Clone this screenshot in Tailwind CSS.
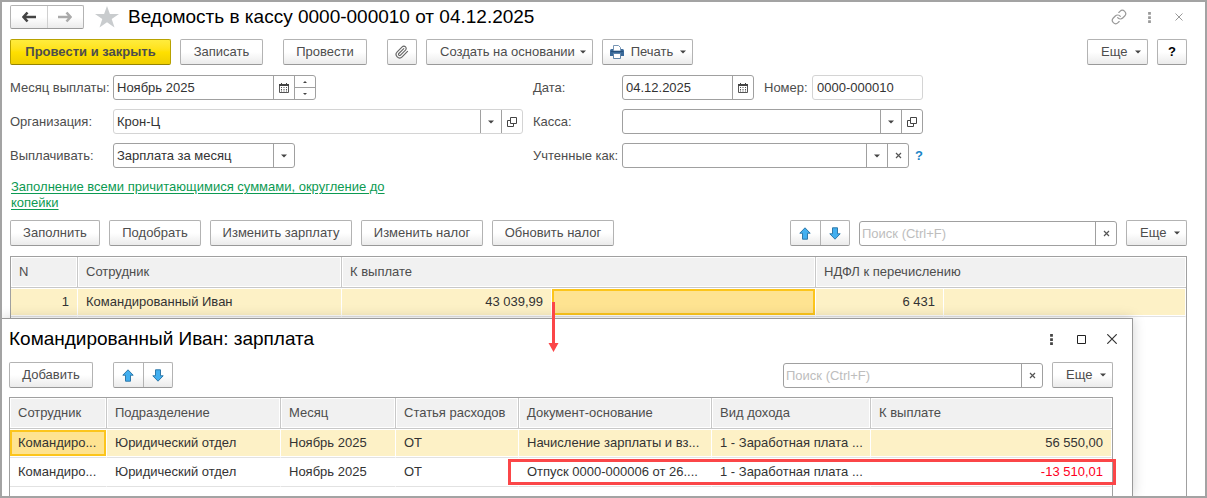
<!DOCTYPE html>
<html lang="ru">

<head>
    <meta charset="UTF-8">
    <meta name="viewport" content="width=device-width, initial-scale=1.0">
    <script src="https://cdn.jsdelivr.net/npm/@tailwindcss/browser@4"></script>
    <title>Ведомость в кассу</title>
</head>

<body class="bg-white font-['Liberation_Sans',Arial,sans-serif] text-[13px] leading-4 text-[#4d4d4d]">
    <!-- Shared icons -->
    <svg class="hidden" xmlns="http://www.w3.org/2000/svg">
        <symbol id="caret" viewBox="0 0 6 4">
            <path d="M0 0.5h6L3 3.5z" fill="#444" />
        </symbol>
        <symbol id="cross" viewBox="0 0 7 7">
            <path d="M1 1l5 5M6 1l-5 5" stroke="#555" stroke-width="1.2" fill="none" />
        </symbol>
        <symbol id="calendar" viewBox="0 0 10 10">
            <path d="M.5 2v7.500h9V2" fill="none" stroke="#555" />
            <path d="M0 1h10v2H0zM2 0h1v1H2zM7 0h1v1H7z" fill="#444" />
            <path d="M2 4.500h1M4.500 4.500h1M7 4.500h1M2 6.500h1M4.500 6.500h1M7 6.500h1M2 8h1M4.500 8h1M7 8h1" stroke="#555" />
        </symbol>
        <symbol id="open" viewBox="0 0 10 10">
            <path d="M3.500 0.500h6v6h-6zM3 3.500H0.500v6h6V7" fill="none" stroke="#444" />
        </symbol>
        <symbol id="arrow-up" viewBox="0 0 12 13">
            <path d="M6 .8l5.200 5.400H8.500v6H3.500v-6H.8z" fill="#41aff0" stroke="#2f79aa" stroke-linejoin="round" />
        </symbol>
        <symbol id="arrow-down" viewBox="0 0 12 13">
            <path d="M6 12.200l5.200-5.400H8.500v-6H3.500v6H.8z" fill="#41aff0" stroke="#2f79aa" stroke-linejoin="round" />
        </symbol>
        <symbol id="dots" viewBox="0 0 3 12">
            <path d="M0 0h3v3H0zM0 4.500h3v3H0zM0 9h3v3H0z" fill="currentColor" />
        </symbol>
    </svg>

    <main class="relative flex min-h-screen flex-col overflow-hidden border-2 border-[#a3a3a3] pl-2 pr-[18px] pt-[3px]">
        <!-- Title -->
        <header class="flex h-6 items-center">
            <div class="flex h-6 w-[74px] rounded-[2px] border border-[#b3b3b3] border-b-[#999] bg-linear-to-b from-white from-50% to-[#ebebeb]">
                <button type="button" aria-label="Назад" class="flex flex-1 items-center justify-center border-r border-[#d0d0d0]">
                    <svg class="h-3 w-[14px]" viewBox="0 0 14 12"><path d="M14 6H2M5.500 1.500L1.500 6l4 4.500" fill="none" stroke="#444" stroke-width="2.600" /></svg>
                </button>
                <button type="button" aria-label="Вперед" class="flex flex-1 items-center justify-center">
                    <svg class="h-3 w-[14px]" viewBox="0 0 14 12"><path d="M0 6h12M8.500 1.500l4 4.500-4 4.500" fill="none" stroke="#aaa" stroke-width="2.600" /></svg>
                </button>
            </div>
            <button type="button" aria-label="В избранное" class="ml-[11px]">
                <svg class="h-[22px] w-6" viewBox="0 0 24 22"><path d="M12 0l2.900 8H24l-7.300 5 2.800 8.600L12 16.300l-7.500 5.300L7.300 13 0 8h9.100z" fill="#c9ccce" /></svg>
            </button>
            <h1 class="ml-[9px] text-[19px] leading-6 text-black">Ведомость в кассу 0000-000010 от 04.12.2025</h1>
            <div class="ml-auto flex items-center text-[#999]">
                <button type="button" aria-label="Ссылка">
                    <svg class="h-4 w-4" viewBox="0 0 24 24" fill="none" stroke="currentColor" stroke-width="1.800" stroke-linecap="round"><path d="M10 13a5 5 0 007.540.540l3-3a5 5 0 00-7.070-7.070l-1.720 1.710" /><path d="M14 11a5 5 0 00-7.540-.540l-3 3a5 5 0 007.070 7.070l1.710-1.710" /></svg>
                </button>
                <button type="button" aria-label="Меню" class="ml-[21px]"><svg class="h-[11px] w-[3px]"><use href="#dots" /></svg></button>
                <button type="button" aria-label="Закрыть" class="ml-6 mr-1">
                    <svg class="h-2 w-2" viewBox="0 0 8 8"><path d="M.5.5l7 7M7.500.5l-7 7" stroke="currentColor" /></svg>
                </button>
            </div>
        </header>

        <!-- Commands -->
        <div class="mt-[10px] flex h-[26px]">
            <button type="button" class="w-[161px] rounded-[2px] border border-[#b8a200] border-b-[#968400] bg-linear-to-b from-[#ffec3c] via-[#ffe000] to-[#efcf00] font-bold">Провести и закрыть</button>
            <button type="button" class="ml-[9px] w-[83px] rounded-[2px] border border-[#b3b3b3] border-b-[#999] bg-linear-to-b from-white from-50% to-[#ebebeb]">Записать</button>
            <button type="button" class="ml-5 w-[84px] rounded-[2px] border border-[#b3b3b3] border-b-[#999] bg-linear-to-b from-white from-50% to-[#ebebeb]">Провести</button>
            <button type="button" aria-label="Файлы" class="ml-5 flex w-[30px] items-center justify-center rounded-[2px] border border-[#b3b3b3] border-b-[#999] bg-linear-to-b from-white from-50% to-[#ebebeb]">
                <svg class="h-[14px] w-[14px]" viewBox="0 0 24 24" fill="none" stroke="#666" stroke-width="2" stroke-linecap="round"><path d="M21.440 11.050l-9.190 9.190a6 6 0 01-8.490-8.490l8.570-8.570A4 4 0 1118 8.840l-8.590 8.570a2 2 0 01-2.830-2.830l8.490-8.480" /></svg>
            </button>
            <button type="button" class="ml-[9px] flex w-[167px] items-center justify-between rounded-[2px] border border-[#b3b3b3] border-b-[#999] bg-linear-to-b from-white from-50% to-[#ebebeb] pl-[13px] pr-[6px]">Создать на основании <svg class="h-1 w-[6px]"><use href="#caret" /></svg></button>
            <button type="button" class="ml-[9px] flex w-[91px] items-center justify-between rounded-[2px] border border-[#b3b3b3] border-b-[#999] bg-linear-to-b from-white from-50% to-[#ebebeb] pl-[7px] pr-[6px]">
                <svg class="h-[14px] w-[14px]" viewBox="0 0 14 14"><path d="M0 5.500Q0 4 1.500 4h11Q14 4 14 5.500V11H0z" fill="#39699a" /><path d="M3.500 6V.5h5l2 2V6z" fill="#fff" stroke="#7795b4" /><path d="M1 6.500h12" stroke="#244f7a" /><path d="M3.500 8.500h7v5h-7z" fill="#fff" stroke="#5f84a9" /></svg>
                Печать <svg class="h-1 w-[6px]"><use href="#caret" /></svg>
            </button>
            <button type="button" class="ml-auto flex w-[61px] items-center justify-between rounded-[2px] border border-[#b3b3b3] border-b-[#999] bg-linear-to-b from-white from-50% to-[#ebebeb] pl-[13px] pr-[6px]">Еще <svg class="h-1 w-[6px]"><use href="#caret" /></svg></button>
            <button type="button" class="ml-[9px] w-[30px] rounded-[2px] border border-[#b3b3b3] border-b-[#999] bg-linear-to-b from-white from-50% to-[#ebebeb] font-bold text-black">?</button>
        </div>

        <!-- Document fields -->
        <form class="mt-[10px] grid max-w-[913px] grid-cols-[minmax(0,513fr)_minmax(0,390fr)] gap-x-[10px] gap-y-[9px]">
            <div class="flex h-[25px] items-center">
                <label for="month" class="w-[103px]">Месяц выплаты:</label>
                <div class="flex h-full w-[203px] rounded-[3px] border border-[#a0a0a0] text-[#333]">
                    <input id="month" type="text" value="Ноябрь 2025" class="min-w-0 flex-1 px-[3px] outline-none">
                    <button type="button" aria-label="Календарь" class="flex w-[21px] items-center justify-center border-l border-[#a0a0a0]"><svg class="h-[10px] w-[10px]"><use href="#calendar" /></svg></button>
                    <div class="flex w-[21px] flex-col border-l border-[#a0a0a0]">
                        <button type="button" aria-label="Больше" class="flex flex-1 items-center justify-center border-b border-[#a0a0a0]"><svg class="h-[2px] w-1" viewBox="0 0 4 2"><path d="M0 2l2-2 2 2z" fill="#444" /></svg></button>
                        <button type="button" aria-label="Меньше" class="flex flex-1 items-center justify-center"><svg class="h-[2px] w-1" viewBox="0 0 4 2"><path d="M0 0l2 2 2-2z" fill="#444" /></svg></button>
                    </div>
                </div>
            </div>
            <div class="flex h-[25px] items-center">
                <label for="date" class="w-[89px]">Дата:</label>
                <div class="flex h-full w-[132px] rounded-[3px] border border-[#a0a0a0] text-[#333]">
                    <input id="date" type="text" value="04.12.2025" class="min-w-0 flex-1 px-[3px] outline-none">
                    <button type="button" aria-label="Календарь" class="flex w-[21px] items-center justify-center border-l border-[#a0a0a0]"><svg class="h-[10px] w-[10px]"><use href="#calendar" /></svg></button>
                </div>
                <label for="number" class="ml-[10px] w-12">Номер:</label>
                <input id="number" type="text" value="0000-000010" class="h-full min-w-0 flex-1 rounded-[3px] border border-[#d4d4d4] px-1 text-[#333] outline-none">
            </div>

            <div class="flex h-[25px] items-center">
                <label for="org" class="w-[103px]">Организация:</label>
                <div class="flex h-full flex-1 rounded-[3px] border border-[#d4d4d4] text-[#333]">
                    <select id="org" class="min-w-0 flex-1 appearance-none px-[3px] outline-none"><option>Крон-Ц</option></select>
                    <button type="button" aria-label="Выбрать" class="flex w-[21px] items-center justify-center border-l border-[#a0a0a0]"><svg class="h-1 w-[6px]"><use href="#caret" /></svg></button>
                    <button type="button" aria-label="Открыть" class="flex w-[21px] items-center justify-center border-l border-[#a0a0a0]"><svg class="h-[10px] w-[10px]"><use href="#open" /></svg></button>
                </div>
            </div>
            <div class="flex h-[25px] items-center">
                <label for="cash" class="w-[89px]">Касса:</label>
                <div class="flex h-full flex-1 rounded-[3px] border border-[#a0a0a0] text-[#333]">
                    <select id="cash" class="min-w-0 flex-1 appearance-none px-[3px] outline-none"><option></option></select>
                    <button type="button" aria-label="Выбрать" class="flex w-[21px] items-center justify-center border-l border-[#a0a0a0]"><svg class="h-1 w-[6px]"><use href="#caret" /></svg></button>
                    <button type="button" aria-label="Открыть" class="flex w-[21px] items-center justify-center border-l border-[#a0a0a0]"><svg class="h-[10px] w-[10px]"><use href="#open" /></svg></button>
                </div>
            </div>

            <div class="flex h-[25px] items-center">
                <label for="pay" class="w-[103px]">Выплачивать:</label>
                <div class="flex h-full w-[182px] rounded-[3px] border border-[#a0a0a0] text-[#333]">
                    <select id="pay" class="min-w-0 flex-1 appearance-none px-[3px] outline-none"><option>Зарплата за месяц</option></select>
                    <button type="button" aria-label="Выбрать" class="flex w-[21px] items-center justify-center border-l border-[#a0a0a0]"><svg class="h-1 w-[6px]"><use href="#caret" /></svg></button>
                </div>
            </div>
            <div class="flex h-[25px] items-center">
                <label for="kept" class="w-[89px] whitespace-nowrap">Учтенные как:</label>
                <div class="flex h-full flex-1 rounded-[3px] border border-[#a0a0a0] text-[#333]">
                    <select id="kept" class="min-w-0 flex-1 appearance-none px-[3px] outline-none"><option></option></select>
                    <button type="button" aria-label="Выбрать" class="flex w-[21px] items-center justify-center border-l border-[#a0a0a0]"><svg class="h-1 w-[6px]"><use href="#caret" /></svg></button>
                    <button type="button" aria-label="Очистить" class="flex w-[21px] items-center justify-center border-l border-[#a0a0a0]"><svg class="h-[7px] w-[7px]"><use href="#cross" /></svg></button>
                </div>
                <button type="button" class="w-[14px] pl-[6px] font-bold text-[#1b85c7]">?</button>
            </div>
        </form>

        <a href="#" class="ml-px mt-[11px] max-w-[384px] text-[#0c9a52] underline underline-offset-2">Заполнение всеми причитающимися суммами, округление до копейки</a>

        <!-- List commands -->
        <div class="mt-[9px] flex h-[26px] gap-[9px]">
            <button type="button" class="w-[90px] rounded-[2px] border border-[#b3b3b3] border-b-[#999] bg-linear-to-b from-white from-50% to-[#ebebeb]">Заполнить</button>
            <button type="button" class="w-[92px] rounded-[2px] border border-[#b3b3b3] border-b-[#999] bg-linear-to-b from-white from-50% to-[#ebebeb]">Подобрать</button>
            <button type="button" class="w-[142px] rounded-[2px] border border-[#b3b3b3] border-b-[#999] bg-linear-to-b from-white from-50% to-[#ebebeb]">Изменить зарплату</button>
            <button type="button" class="w-[122px] rounded-[2px] border border-[#b3b3b3] border-b-[#999] bg-linear-to-b from-white from-50% to-[#ebebeb]">Изменить налог</button>
            <button type="button" class="w-[122px] rounded-[2px] border border-[#b3b3b3] border-b-[#999] bg-linear-to-b from-white from-50% to-[#ebebeb]">Обновить налог</button>
            <div class="ml-auto flex w-[60px] rounded-[2px] border border-[#b3b3b3] border-b-[#999] bg-linear-to-b from-white from-50% to-[#ebebeb]">
                <button type="button" aria-label="Вверх" class="flex flex-1 items-center justify-center border-r border-[#b3b3b3]"><svg class="h-[13px] w-3"><use href="#arrow-up" /></svg></button>
                <button type="button" aria-label="Вниз" class="flex flex-1 items-center justify-center"><svg class="h-[13px] w-3"><use href="#arrow-down" /></svg></button>
            </div>
            <div class="mt-px flex w-[258px] rounded-[3px] border border-[#a0a0a0]">
                <input type="text" aria-label="Поиск" placeholder="Поиск (Ctrl+F)" class="min-w-0 flex-1 px-[2px] outline-none placeholder:text-[#bdbdbd]">
                <button type="button" aria-label="Очистить" class="flex w-[21px] items-center justify-center border-l border-[#a0a0a0]"><svg class="h-[7px] w-[7px]"><use href="#cross" /></svg></button>
            </div>
            <button type="button" class="flex w-[61px] items-center justify-between rounded-[2px] border border-[#b3b3b3] border-b-[#999] bg-linear-to-b from-white from-50% to-[#ebebeb] pl-[13px] pr-[6px]">Еще <svg class="h-1 w-[6px]"><use href="#caret" /></svg></button>
        </div>

        <!-- Employees -->
        <div class="mt-[10px] flex-1 border border-b-0 border-[#a0a0a0]">
            <table class="w-full table-fixed border-separate border-spacing-0">
                <colgroup>
                    <col class="w-[67px]">
                    <col class="w-[264px]">
                    <col class="w-[210px]">
                    <col class="w-[264px]">
                    <col class="w-[128px]">
                    <col>
                </colgroup>
                <thead class="text-left [&_th]:h-[31px] [&_th]:border-b [&_th]:border-r [&_th]:border-[#c8c8c8] [&_th]:bg-[#f1f1f1] [&_th]:px-2 [&_th]:font-normal [&_th]:shadow-[inset_0_0_0_1px_#fff] [&_th:last-child]:border-r-0">
                    <tr>
                        <th>N</th>
                        <th>Сотрудник</th>
                        <th colspan="2">К выплате</th>
                        <th colspan="2">НДФЛ к перечислению</th>
                    </tr>
                </thead>
                <tbody class="text-[#333] [&_td]:h-[29px] [&_td]:border-b [&_td]:border-r [&_td]:border-r-white [&_td]:border-b-[#e2e2e2] [&_td]:px-2">
                    <tr class="bg-[#fdf1c6] [&_td]:shadow-[inset_0_1px_#fff,inset_0_-1px_#fff]">
                        <td class="text-right">1</td>
                        <td>Командированный Иван</td>
                        <td class="text-right">43 039,99</td>
                        <td class="bg-[#fee391] p-0!"><div class="my-px h-[26px] border-2 border-[#fcc51c]"></div></td>
                        <td class="text-right">6 431</td>
                        <td></td>
                    </tr>
                </tbody>
            </table>
        </div>

        <!-- Breakdown window -->
        <section class="absolute bottom-0 left-0 right-[72px] top-[316px] flex flex-col border-r border-t border-[#999] bg-white pl-[7px] pr-[19px] shadow-[0_0_12px_rgba(0,0,0,0.18)]">
            <div class="mt-2 flex h-6 items-center">
                <h2 class="text-[19px] leading-6 text-black">Командированный Иван: зарплата</h2>
                <div class="ml-auto flex items-center text-[#444]">
                    <button type="button" aria-label="Меню"><svg class="h-[11px] w-[3px]"><use href="#dots" /></svg></button>
                    <button type="button" aria-label="Развернуть" class="ml-6"><svg class="h-[9px] w-[9px]" viewBox="0 0 9 9"><path d="M.5.5h8v8h-8z" fill="none" stroke="#222" /></svg></button>
                    <button type="button" aria-label="Закрыть" class="ml-[21px] mr-[-4px]"><svg class="h-[10px] w-[10px]" viewBox="0 0 10 10"><path d="M.3.3l9.400 9.400M9.700.3L.3 9.700" stroke="#333" stroke-width="1.200" /></svg></button>
                </div>
            </div>
            <div class="mt-[11px] flex h-[26px] gap-[9px]">
                <button type="button" class="w-[84px] rounded-[2px] border border-[#b3b3b3] border-b-[#999] bg-linear-to-b from-white from-50% to-[#ebebeb]">Добавить</button>
                <div class="ml-[11px] flex w-[60px] rounded-[2px] border border-[#b3b3b3] border-b-[#999] bg-linear-to-b from-white from-50% to-[#ebebeb]">
                    <button type="button" aria-label="Вверх" class="flex flex-1 items-center justify-center border-r border-[#b3b3b3]"><svg class="h-[13px] w-3"><use href="#arrow-up" /></svg></button>
                    <button type="button" aria-label="Вниз" class="flex flex-1 items-center justify-center"><svg class="h-[13px] w-3"><use href="#arrow-down" /></svg></button>
                </div>
                <div class="ml-auto mt-px flex w-[260px] rounded-[3px] border border-[#a0a0a0]">
                    <input type="text" aria-label="Поиск" placeholder="Поиск (Ctrl+F)" class="min-w-0 flex-1 px-[2px] outline-none placeholder:text-[#bdbdbd]">
                    <button type="button" aria-label="Очистить" class="flex w-[21px] items-center justify-center border-l border-[#a0a0a0]"><svg class="h-[7px] w-[7px]"><use href="#cross" /></svg></button>
                </div>
                <button type="button" class="flex w-[61px] items-center justify-between rounded-[2px] border border-[#b3b3b3] border-b-[#999] bg-linear-to-b from-white from-50% to-[#ebebeb] pl-[13px] pr-[6px]">Еще <svg class="h-1 w-[6px]"><use href="#caret" /></svg></button>
            </div>
            <div class="relative mt-[9px] flex-1 border border-b-0 border-[#a0a0a0]">
                <table class="w-full table-fixed border-separate border-spacing-0">
                    <colgroup>
                        <col class="w-[97px]">
                        <col class="w-[174px]">
                        <col class="w-[115px]">
                        <col class="w-[123px]">
                        <col class="w-[193px]">
                        <col class="w-[159px]">
                        <col>
                    </colgroup>
                    <thead class="text-left [&_th]:h-[31px] [&_th]:border-b [&_th]:border-r [&_th]:border-[#c8c8c8] [&_th]:bg-[#f1f1f1] [&_th]:px-2 [&_th]:font-normal [&_th]:whitespace-nowrap [&_th]:shadow-[inset_0_0_0_1px_#fff] [&_th:last-child]:border-r-0">
                        <tr>
                            <th>Сотрудник</th>
                            <th>Подразделение</th>
                            <th>Месяц</th>
                            <th>Статья расходов</th>
                            <th>Документ-основание</th>
                            <th>Вид дохода</th>
                            <th>К выплате</th>
                        </tr>
                    </thead>
                    <tbody class="text-[#333] [&_td]:h-[29px] [&_td]:whitespace-nowrap [&_td]:border-b [&_td]:border-r [&_td]:border-r-white [&_td]:border-b-[#e2e2e2] [&_td]:px-2">
                        <tr class="bg-[#fdf1c6] [&_td]:shadow-[inset_0_1px_#fff,inset_0_-1px_#fff]">
                            <td class="bg-[#fee391] p-0!"><div class="my-px h-[26px] border-2 border-[#fcc51c] px-[6px] leading-[22px]">Командиро...</div></td>
                            <td>Юридический отдел</td>
                            <td>Ноябрь 2025</td>
                            <td>ОТ</td>
                            <td>Начисление зарплаты и вз...</td>
                            <td>1 - Заработная плата ...</td>
                            <td class="text-right">56 550,00</td>
                        </tr>
                        <tr>
                            <td>Командиро...</td>
                            <td>Юридический отдел</td>
                            <td>Ноябрь 2025</td>
                            <td>ОТ</td>
                            <td>Отпуск 0000-000006 от 26....</td>
                            <td>1 - Заработная плата ...</td>
                            <td class="text-right text-[#ff0022]">-13 510,01</td>
                        </tr>
                    </tbody>
                </table>
                <!-- Highlighted row -->
                <div class="pointer-events-none absolute -right-1 left-[498px] top-[61px] h-[26px] border-3 border-[#fb4648]"></div>
            </div>
        </section>

        <!-- Pointer from the cell to the window -->
        <svg class="pointer-events-none absolute left-[546px] top-[300px] h-[50px] w-[11px]" viewBox="0 0 11 50"><path d="M4 0h3v41h3.500L5.500 50 .5 41H4z" fill="#fb4648" /></svg>
    </main>
</body>

</html>
